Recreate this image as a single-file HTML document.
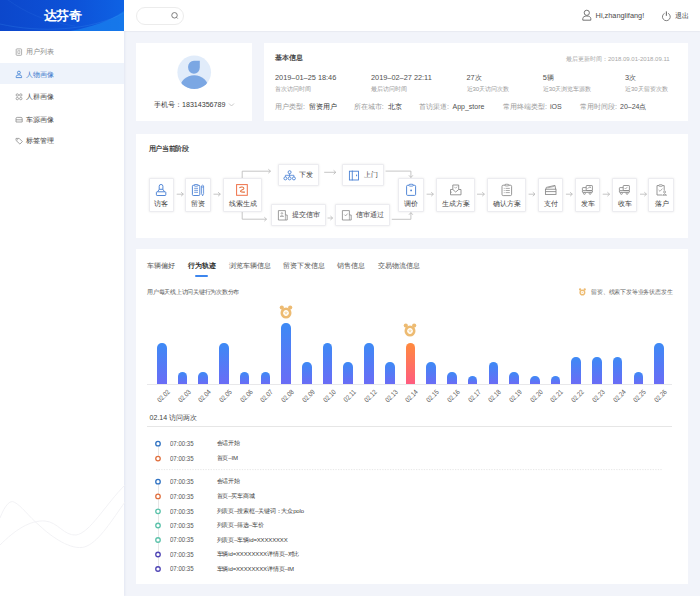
<!DOCTYPE html><html><head><meta charset="utf-8"><style>
html,body{margin:0;padding:0;width:700px;height:596px;overflow:hidden;background:#f2f4fa;font-family:"Liberation Sans",sans-serif;}
.t{position:absolute;white-space:nowrap;line-height:12px;}
.bx{position:absolute;box-sizing:border-box;}
.card{position:absolute;background:#fff;}
svg{position:absolute;overflow:visible;}
</style></head><body>
<div class="card" style="left:0;top:0;width:124px;height:596px;box-shadow:1px 0 2px rgba(200,205,225,.35)"></div>
<svg style="left:0;top:460px" width="124" height="136" viewBox="0 0 124 136">
<path d="M0 58 C5 45 10 40 14 42 C22 46 28 56 40 66 C55 80 75 92 87 86 C100 80 112 60 125 42" fill="none" stroke="#f0f0f4" stroke-width="0.9"/>
<path d="M0 85 C15 70 30 60 45 61 C58 62 64 76 76 75 C90 73 105 45 125 25" fill="none" stroke="#f0f0f4" stroke-width="0.9"/>
</svg>
<div class="bx" style="left:0;top:62.6px;width:124px;height:21.8px;background:#eef3fb"></div>
<div class="t" style="left:26px;top:46.10px;font-size:7px;color:#8a8a8a;font-weight:normal;">用户列表</div>
<div class="t" style="left:26px;top:68.60px;font-size:7px;color:#3a78cc;font-weight:normal;">人物画像</div>
<div class="t" style="left:26px;top:91.10px;font-size:7px;color:#444;font-weight:normal;">人群画像</div>
<div class="t" style="left:26px;top:113.60px;font-size:7px;color:#444;font-weight:normal;">车源画像</div>
<div class="t" style="left:26px;top:135.40px;font-size:7px;color:#444;font-weight:normal;">标签管理</div>
<svg style="left:0;top:0" width="1" height="1"><rect x="16.2" y="48.9" width="5.4" height="6.4" rx="0.7" fill="none" stroke="#9a9a9a" stroke-width="0.8"/><rect x="17.9" y="50.8" width="2" height="2.6" fill="none" stroke="#9a9a9a" stroke-width="0.6"/></svg>
<svg style="left:0;top:0" width="1" height="1"><circle cx="18.9" cy="72.6" r="1.45" fill="none" stroke="#3f7fd3" stroke-width="0.85"/><path d="M16.2 77.6 V76.6 Q16.2 74.8 18.9 74.8 Q21.6 74.8 21.6 76.6 V77.6 Z" fill="none" stroke="#3f7fd3" stroke-width="0.85"/></svg>
<svg style="left:0;top:0" width="1" height="1"><circle cx="17.3" cy="95" r="1.2" fill="none" stroke="#8d8d8d" stroke-width="0.75"/><circle cx="20.8" cy="95" r="1.2" fill="none" stroke="#8d8d8d" stroke-width="0.75"/><circle cx="17.3" cy="98.6" r="1.2" fill="none" stroke="#8d8d8d" stroke-width="0.75"/><circle cx="20.8" cy="98.6" r="1.2" fill="none" stroke="#8d8d8d" stroke-width="0.75"/></svg>
<svg style="left:0;top:0" width="1" height="1"><path d="M16 122 V118.6 Q16 117.4 17.2 117.4 H21 Q22.2 117.4 22.2 118.6 V122 Z M16 119.8 H22.2" fill="none" stroke="#8d8d8d" stroke-width="0.8"/></svg>
<svg style="left:0;top:0" width="1" height="1"><path d="M16 138.4 H19.2 L22.4 141.6 L19.9 144.1 L16 140.4 Z" fill="none" stroke="#8d8d8d" stroke-width="0.8"/><circle cx="17.6" cy="139.8" r="0.5" fill="#8d8d8d"/></svg>
<div class="card" style="left:124px;top:0;width:576px;height:31px;box-shadow:0 0.5px 1.5px rgba(190,192,205,.45)"></div>
<div class="bx" style="left:0;top:0;width:124px;height:31px;background:linear-gradient(90deg,#0c47cb 0%,#0d52d8 60%,#0e62e4 100%);overflow:hidden">
<svg style="left:0;top:0" width="124" height="31" viewBox="0 0 124 31">
<path d="M70 31 C92 27 110 21 124 11 V31 Z" fill="#1a82ee" opacity="0.7"/>
<path d="M0 24 C40 33 90 31 124 13" fill="none" stroke="#3a8ff0" stroke-width="0.5" opacity="0.5"/>
<path d="M8 0 C25 12 45 22 75 26" fill="none" stroke="#3a7fe8" stroke-width="0.5" opacity="0.35"/>
</svg></div>
<div class="t" style="left:43.7px;top:9.60px;font-size:13px;color:#fff;font-weight:bold;letter-spacing:-0.5px">达芬奇</div>
<div class="bx" style="left:136px;top:7.3px;width:48px;height:17.4px;border:1px solid #ececec;border-radius:9px"></div>
<svg style="left:169px;top:10px" width="10" height="10" viewBox="0 0 10 10">
<circle cx="5.5" cy="5.3" r="2.75" fill="none" stroke="#6a6a6a" stroke-width="0.85"/><line x1="7.5" y1="7.3" x2="8.7" y2="8.5" stroke="#6a6a6a" stroke-width="0.85"/></svg>
<svg style="left:581px;top:9px" width="12" height="13" viewBox="0 0 12 13">
<circle cx="5.8" cy="3.8" r="2.6" fill="none" stroke="#666" stroke-width="0.9"/><path d="M1.8 11.2 V9.5 C1.8 8 3.5 7 5.8 7 C8.1 7 9.8 8 9.8 9.5 V11.2 Z" fill="none" stroke="#666" stroke-width="0.9"/></svg>
<div class="t" style="left:595.6px;top:9.80px;font-size:7.35px;color:#4a4a4a;font-weight:normal;">Hi,zhanglifang!</div>
<svg style="left:660px;top:9px" width="13" height="13" viewBox="0 0 13 13">
<path d="M4.6 4.3 A3.9 3.9 0 1 0 8.1 4.3" fill="none" stroke="#6a6a6a" stroke-width="0.85"/><line x1="6.35" y1="2.4" x2="6.35" y2="6.8" stroke="#555" stroke-width="0.95"/></svg>
<div class="t" style="left:675px;top:10.00px;font-size:6.5px;color:#444;font-weight:normal;">退出</div>
<div class="card" style="left:136px;top:43.3px;width:116px;height:77.7px"></div>
<svg style="left:176px;top:54px" width="36" height="36" viewBox="0 0 36 36">
<defs><clipPath id="cc"><circle cx="18.2" cy="18.3" r="16.8"/></clipPath></defs>
<circle cx="18.2" cy="18.3" r="16.8" fill="#e1ecfa"/>
<g clip-path="url(#cc)">
<path d="M23.8 6.7 V13.6 A5.85 6.2 0 0 1 12.1 13.6 V12.55 A5.85 5.85 0 0 1 17.95 6.7 Z" fill="#7ba7e3"/>
<ellipse cx="18.2" cy="34.5" rx="14.2" ry="13.3" fill="#7ba7e3"/>
</g></svg>
<div class="t" style="left:154px;top:99.00px;font-size:7.1px;color:#3a3a3a;font-weight:normal;">手机号：18314356789</div>
<svg style="left:228px;top:102px" width="7" height="6" viewBox="0 0 7 6"><path d="M1 1.5 L3.5 4 L6 1.5" fill="none" stroke="#bbb" stroke-width="0.8"/></svg>
<div class="card" style="left:264px;top:43.3px;width:424px;height:77.7px"></div>
<div class="t" style="left:275px;top:52.20px;font-size:7px;color:#333;font-weight:normal;-webkit-text-stroke:0.2px #333">基本信息</div>
<div class="t" style="left:566px;top:52.70px;font-size:6px;color:#a8a8a8;font-weight:normal;">最后更新时间：2018.09.01-2018.09.11</div>
<div class="t" style="left:275px;top:71.60px;font-size:7.35px;color:#505050;font-weight:normal;">2019–01–25 18:46</div>
<div class="t" style="left:275px;top:82.60px;font-size:6px;color:#999;font-weight:normal;">首次访问时间</div>
<div class="t" style="left:371px;top:71.60px;font-size:7.35px;color:#505050;font-weight:normal;">2019–02–27 22:11</div>
<div class="t" style="left:371px;top:82.60px;font-size:6px;color:#999;font-weight:normal;">最后访问时间</div>
<div class="t" style="left:466.5px;top:71.60px;font-size:7.35px;color:#505050;font-weight:normal;">27次</div>
<div class="t" style="left:466.5px;top:82.60px;font-size:6px;color:#999;font-weight:normal;">近30天访问次数</div>
<div class="t" style="left:542.7px;top:71.60px;font-size:7.35px;color:#505050;font-weight:normal;">5辆</div>
<div class="t" style="left:542.7px;top:82.60px;font-size:6px;color:#999;font-weight:normal;">近30天浏览车源数</div>
<div class="t" style="left:625px;top:71.60px;font-size:7.35px;color:#505050;font-weight:normal;">3次</div>
<div class="t" style="left:625px;top:82.60px;font-size:6px;color:#999;font-weight:normal;">近30天留资次数</div>
<div class="t" style="left:275px;top:101.00px;font-size:7px;color:#999;font-weight:normal;">用户类型:</div>
<div class="t" style="left:309.4px;top:101.00px;font-size:7px;color:#333;font-weight:normal;">留资用户</div>
<div class="t" style="left:353.7px;top:101.00px;font-size:7px;color:#999;font-weight:normal;">所在城市:</div>
<div class="t" style="left:388px;top:101.00px;font-size:7px;color:#333;font-weight:normal;">北京</div>
<div class="t" style="left:419px;top:101.00px;font-size:7px;color:#999;font-weight:normal;">首访渠道:</div>
<div class="t" style="left:452.5px;top:101.00px;font-size:7px;color:#505050;font-weight:normal;">App_store</div>
<div class="t" style="left:503px;top:101.00px;font-size:7px;color:#999;font-weight:normal;">常用终端类型:</div>
<div class="t" style="left:550px;top:101.00px;font-size:7px;color:#505050;font-weight:normal;">iOS</div>
<div class="t" style="left:580px;top:101.00px;font-size:7px;color:#999;font-weight:normal;">常用时间段:</div>
<div class="t" style="left:620px;top:101.00px;font-size:7px;color:#505050;font-weight:normal;">20–24点</div>
<div class="card" style="left:136px;top:133.5px;width:552px;height:104.5px"></div>
<div class="t" style="left:148.5px;top:142.80px;font-size:7px;color:#333;font-weight:normal;-webkit-text-stroke:0.2px #333;letter-spacing:-0.3px">用户当前阶段</div>
<div class="bx" style="left:148.5px;top:178px;width:25.00px;height:34.00px;border:1px solid #ececf0;border-radius:1px;box-shadow:0 0 2.5px rgba(0,0,0,.09);background:#fff"></div>
<div class="t" style="left:154.4px;top:198.00px;font-size:6.6px;color:#444;font-weight:normal;">访客</div>
<div class="bx" style="left:185.2px;top:178px;width:25.50px;height:34.00px;border:1px solid #ececf0;border-radius:1px;box-shadow:0 0 2.5px rgba(0,0,0,.09);background:#fff"></div>
<div class="t" style="left:191.35px;top:198.00px;font-size:6.6px;color:#444;font-weight:normal;">留资</div>
<div class="bx" style="left:222.5px;top:178px;width:39.00px;height:34.00px;border:1px solid #ececf0;border-radius:1px;box-shadow:0 0 2.5px rgba(0,0,0,.09);background:#fff"></div>
<div class="t" style="left:228.8px;top:198.00px;font-size:6.6px;color:#444;font-weight:normal;">线索生成</div>
<div class="bx" style="left:398.4px;top:178px;width:25.20px;height:34.00px;border:1px solid #ececf0;border-radius:1px;box-shadow:0 0 2.5px rgba(0,0,0,.09);background:#fff"></div>
<div class="t" style="left:404.4px;top:198.00px;font-size:6.6px;color:#444;font-weight:normal;">调价</div>
<div class="bx" style="left:436px;top:178px;width:38.50px;height:34.00px;border:1px solid #ececf0;border-radius:1px;box-shadow:0 0 2.5px rgba(0,0,0,.09);background:#fff"></div>
<div class="t" style="left:442.05px;top:198.00px;font-size:6.6px;color:#444;font-weight:normal;">生成方案</div>
<div class="bx" style="left:486.8px;top:178px;width:38.80px;height:34.00px;border:1px solid #ececf0;border-radius:1px;box-shadow:0 0 2.5px rgba(0,0,0,.09);background:#fff"></div>
<div class="t" style="left:493.00000000000006px;top:198.00px;font-size:6.6px;color:#444;font-weight:normal;">确认方案</div>
<div class="bx" style="left:537.5px;top:178px;width:25.40px;height:34.00px;border:1px solid #ececf0;border-radius:1px;box-shadow:0 0 2.5px rgba(0,0,0,.09);background:#fff"></div>
<div class="t" style="left:543.6px;top:198.00px;font-size:6.6px;color:#444;font-weight:normal;">支付</div>
<div class="bx" style="left:574.7px;top:178px;width:25.20px;height:34.00px;border:1px solid #ececf0;border-radius:1px;box-shadow:0 0 2.5px rgba(0,0,0,.09);background:#fff"></div>
<div class="t" style="left:580.6999999999999px;top:198.00px;font-size:6.6px;color:#444;font-weight:normal;">发车</div>
<div class="bx" style="left:611.7px;top:178px;width:25.10px;height:34.00px;border:1px solid #ececf0;border-radius:1px;box-shadow:0 0 2.5px rgba(0,0,0,.09);background:#fff"></div>
<div class="t" style="left:617.65px;top:198.00px;font-size:6.6px;color:#444;font-weight:normal;">收车</div>
<div class="bx" style="left:648.4px;top:178px;width:25.40px;height:34.00px;border:1px solid #ececf0;border-radius:1px;box-shadow:0 0 2.5px rgba(0,0,0,.09);background:#fff"></div>
<div class="t" style="left:654.4999999999999px;top:198.00px;font-size:6.6px;color:#444;font-weight:normal;">落户</div>
<div class="bx" style="left:277.5px;top:163.5px;width:41.50px;height:22.50px;border:1px solid #ececf0;border-radius:1px;box-shadow:0 0 2.5px rgba(0,0,0,.09);background:#fff"></div>
<div class="t" style="left:299.3px;top:169.35px;font-size:6.6px;color:#444;font-weight:normal;">下发</div>
<div class="bx" style="left:341.5px;top:163.5px;width:42.00px;height:22.50px;border:1px solid #ececf0;border-radius:1px;box-shadow:0 0 2.5px rgba(0,0,0,.09);background:#fff"></div>
<div class="t" style="left:363.7px;top:169.35px;font-size:6.6px;color:#444;font-weight:normal;">上门</div>
<div class="bx" style="left:270.7px;top:203.5px;width:54.90px;height:22.50px;border:1px solid #ececf0;border-radius:1px;box-shadow:0 0 2.5px rgba(0,0,0,.09);background:#fff"></div>
<div class="t" style="left:292.4px;top:209.35px;font-size:6.6px;color:#444;font-weight:normal;">提交信审</div>
<div class="bx" style="left:334.7px;top:203.5px;width:55.30px;height:22.50px;border:1px solid #ececf0;border-radius:1px;box-shadow:0 0 2.5px rgba(0,0,0,.09);background:#fff"></div>
<div class="t" style="left:356.4px;top:209.35px;font-size:6.6px;color:#444;font-weight:normal;">信审通过</div>
<svg style="left:0;top:0" width="1" height="1"><path d="M176.7 194.2 H183.3 M181.10000000000002 192.2 L183.3 194.2 L181.10000000000002 196.2" fill="none" stroke="#b8b8b8" stroke-width="0.8"/></svg>
<svg style="left:0;top:0" width="1" height="1"><path d="M213.5 194.2 H220.3 M218.10000000000002 192.2 L220.3 194.2 L218.10000000000002 196.2" fill="none" stroke="#b8b8b8" stroke-width="0.8"/></svg>
<svg style="left:0;top:0" width="1" height="1"><path d="M426.6 194.2 H433.4 M431.2 192.2 L433.4 194.2 L431.2 196.2" fill="none" stroke="#b8b8b8" stroke-width="0.8"/></svg>
<svg style="left:0;top:0" width="1" height="1"><path d="M477 194.2 H484.4 M482.2 192.2 L484.4 194.2 L482.2 196.2" fill="none" stroke="#b8b8b8" stroke-width="0.8"/></svg>
<svg style="left:0;top:0" width="1" height="1"><path d="M528.6 194.2 H535 M532.8 192.2 L535 194.2 L532.8 196.2" fill="none" stroke="#b8b8b8" stroke-width="0.8"/></svg>
<svg style="left:0;top:0" width="1" height="1"><path d="M565.9 194.2 H572.3 M570.0999999999999 192.2 L572.3 194.2 L570.0999999999999 196.2" fill="none" stroke="#b8b8b8" stroke-width="0.8"/></svg>
<svg style="left:0;top:0" width="1" height="1"><path d="M602.7 194.2 H609.6 M607.4 192.2 L609.6 194.2 L607.4 196.2" fill="none" stroke="#b8b8b8" stroke-width="0.8"/></svg>
<svg style="left:0;top:0" width="1" height="1"><path d="M640 194.2 H646.5 M644.3 192.2 L646.5 194.2 L644.3 196.2" fill="none" stroke="#b8b8b8" stroke-width="0.8"/></svg>
<svg style="left:0;top:0" width="1" height="1"><path d="M324.2 172.3 H335.8 M333.6 170.3 L335.8 172.3 L333.6 174.3" fill="none" stroke="#b8b8b8" stroke-width="0.8"/></svg>
<svg style="left:0;top:0" width="1" height="1"><path d="M327.6 218 H332.6 M330.40000000000003 216 L332.6 218 L330.40000000000003 220" fill="none" stroke="#b8b8b8" stroke-width="0.8"/></svg>
<svg style="left:0;top:0" width="1" height="1">
<path d="M242.2 178 V171.2 H270.5" fill="none" stroke="#b8b8b8" stroke-width="0.8"/>
<path d="M268.3 169.2 L270.5 171.2 L268.3 173.2" fill="none" stroke="#b8b8b8" stroke-width="0.8"/>
<path d="M242.2 212 V219.2 H266.5" fill="none" stroke="#b8b8b8" stroke-width="0.8"/>
<path d="M264.3 217.2 L266.5 219.2 L264.3 221.2" fill="none" stroke="#b8b8b8" stroke-width="0.8"/>
<path d="M385.6 171.1 H410.9 V177.5" fill="none" stroke="#b8b8b8" stroke-width="0.8"/>
<path d="M408.9 175.3 L410.9 177.5 L412.9 175.3" fill="none" stroke="#b8b8b8" stroke-width="0.8"/>
<path d="M391.8 219.3 H410.9 V212.6" fill="none" stroke="#b8b8b8" stroke-width="0.8"/>
<path d="M408.9 214.8 L410.9 212.6 L412.9 214.8" fill="none" stroke="#b8b8b8" stroke-width="0.8"/>
</svg>
<svg style="left:154px;top:182px" width="14" height="16" viewBox="154 182 14 16"><path d="M159.2 189.3 V186.3 A1.85 1.85 0 0 1 162.9 186.3 V189.3 Z" fill="none" stroke="#4b82d4" stroke-width="0.95"/><path d="M159.2 189.3 L157.6 191.8 M162.9 189.3 L164.5 191.8" fill="none" stroke="#4b82d4" stroke-width="0.95"/><rect x="156.4" y="191.8" width="9.4" height="3.7" rx="0.7" fill="none" stroke="#4b82d4" stroke-width="0.95"/></svg>
<svg style="left:190px;top:182px" width="16" height="16" viewBox="190 182 16 16"><rect x="192.4" y="185.3" width="7.4" height="10.2" rx="0.9" fill="none" stroke="#4b82d4" stroke-width="0.95"/><rect x="194.3" y="184.5" width="3.6" height="1.7" rx="0.5" fill="#fff" stroke="#4b82d4" stroke-width="0.8"/><path d="M194.2 188.3 H198 M194.2 190.3 H198 M194.2 192.3 H198" stroke="#4b82d4" stroke-width="0.8"/><path d="M201.6 185.8 Q202.6 184.6 203.6 185.8 V193.6 L202.6 195.8 L201.6 193.6 Z M201.6 187 H203.6" fill="none" stroke="#4b82d4" stroke-width="0.8"/></svg>
<svg style="left:234px;top:182px" width="16" height="16" viewBox="234 182 16 16"><rect x="236.6" y="184.6" width="10.7" height="10.7" fill="none" stroke="#ef7148" stroke-width="1"/><path d="M239.4 187.7 C241 186.6 244 186.7 243.9 188.5 C243.7 189.9 240.6 189.7 240.5 191.3 C240.5 192.3 243 192.1 244.9 192.1" fill="none" stroke="#e2703c" stroke-width="1.05"/></svg>
<svg style="left:282px;top:167px" width="16" height="16" viewBox="282 167 16 16"><circle cx="289.6" cy="172.2" r="1.5" fill="none" stroke="#4b82d4" stroke-width="0.9"/><circle cx="285.4" cy="178.4" r="1.5" fill="none" stroke="#4b82d4" stroke-width="0.9"/><circle cx="289.6" cy="178.4" r="1.5" fill="none" stroke="#4b82d4" stroke-width="0.9"/><circle cx="293.9" cy="178.4" r="1.5" fill="none" stroke="#4b82d4" stroke-width="0.9"/><path d="M289.6 173.7 V176.9 M285.4 176.9 V175.3 H293.9 V176.9" fill="none" stroke="#4b82d4" stroke-width="0.8"/></svg>
<svg style="left:346px;top:167px" width="16" height="16" viewBox="346 167 16 16"><rect x="349.4" y="171.2" width="9.1" height="8.8" fill="none" stroke="#4b82d4" stroke-width="0.9"/><path d="M352.3 170.6 V180.4" stroke="#4b82d4" stroke-width="0.9"/><path d="M356.6 174.6 V176.2" stroke="#4b82d4" stroke-width="1"/></svg>
<svg style="left:404px;top:182px" width="14" height="16" viewBox="404 182 14 16"><rect x="406.6" y="185.3" width="9" height="10.1" rx="1" fill="none" stroke="#4b82d4" stroke-width="0.95"/><ellipse cx="411.1" cy="185.2" rx="2.6" ry="1" fill="#fff" stroke="#4b82d4" stroke-width="0.85"/><circle cx="411.1" cy="190.4" r="0.9" fill="#4b82d4"/></svg>
<svg style="left:276px;top:208px" width="14" height="14" viewBox="276 208 14 14"><path d="M278.4 210.6 H285.4 V215 H287.2 V220 H278.4 Z" fill="none" stroke="#858585" stroke-width="0.8"/><path d="M285.4 215 V220" stroke="#858585" stroke-width="0.6"/><circle cx="281.9" cy="213.4" r="0.8" fill="none" stroke="#858585" stroke-width="0.6"/><path d="M280.2 216.4 Q281.9 214.6 283.6 216.4 Z" fill="none" stroke="#858585" stroke-width="0.6"/></svg>
<svg style="left:340px;top:208px" width="14" height="14" viewBox="340 208 14 14"><path d="M342.4 210.6 H349.4 V215 H351.2 V220 H342.4 Z" fill="none" stroke="#858585" stroke-width="0.8"/><path d="M349.4 215 V220" stroke="#858585" stroke-width="0.6"/><path d="M344.3 214.6 L345.6 215.9 L347.6 213.6" fill="none" stroke="#858585" stroke-width="0.7"/></svg>
<svg style="left:448px;top:182px" width="16" height="16" viewBox="448 182 16 16"><path d="M452.8 189.5 V185 H458.7 V189.5" fill="none" stroke="#858585" stroke-width="0.85"/><path d="M454.3 186.8 L455.7 188.2 L457.3 186.6" fill="none" stroke="#858585" stroke-width="0.6"/><path d="M450.5 189.5 H452.8 L455.7 192 L458.7 189.5 H461 V194.8 H450.5 Z" fill="none" stroke="#858585" stroke-width="0.85"/><path d="M450.5 192.2 H452" stroke="#858585" stroke-width="0.6"/></svg>
<svg style="left:499px;top:182px" width="16" height="16" viewBox="499 182 16 16"><rect x="502" y="185.2" width="9.6" height="10.4" rx="1.2" fill="none" stroke="#858585" stroke-width="0.85"/><ellipse cx="506.8" cy="185.1" rx="2.4" ry="0.9" fill="#fff" stroke="#858585" stroke-width="0.75"/><path d="M503.8 188.4 H504.6 M505.6 188.4 H509.8 M503.8 190.5 H504.6 M505.6 190.5 H509.8 M503.8 192.6 H504.6 M505.6 192.6 H509.8" stroke="#858585" stroke-width="0.7"/></svg>
<svg style="left:543px;top:182px" width="16" height="16" viewBox="543 182 16 16"><path d="M546 189.2 L546.3 187.4 L555 185.4 L555.6 189.2" fill="none" stroke="#858585" stroke-width="0.85"/><path d="M547.5 187.9 L554.5 186.4" stroke="#858585" stroke-width="0.6"/><rect x="545.4" y="189.2" width="10.6" height="5.2" fill="none" stroke="#858585" stroke-width="0.85"/><path d="M545.4 191.6 H556" stroke="#858585" stroke-width="0.85"/></svg>
<svg style="left:579px;top:182px" width="16" height="16" viewBox="579 182 16 16"><rect x="586.2" y="185.5" width="6.2" height="5.1" rx="0.6" fill="none" stroke="#858585" stroke-width="0.85"/><path d="M586.2 187.6 H582.9 Q582.4 187.6 582.4 188.2 V190.6" fill="none" stroke="#858585" stroke-width="0.85"/><rect x="582.4" y="190.6" width="10" height="1.8" rx="0.4" fill="none" stroke="#858585" stroke-width="0.85"/><circle cx="584.4" cy="193.4" r="0.95" fill="#fff" stroke="#858585" stroke-width="0.8"/><circle cx="590.1" cy="193.4" r="0.95" fill="#fff" stroke="#858585" stroke-width="0.8"/><path d="M587.5 189 Q588.5 186.6 590.6 187.2 M589.6 186.6 L590.6 187.2 L590 188.1" fill="none" stroke="#858585" stroke-width="0.6"/></svg>
<svg style="left:616px;top:182px" width="16" height="16" viewBox="616 182 16 16"><rect x="623.2" y="185.5" width="6.2" height="5.1" rx="0.6" fill="none" stroke="#858585" stroke-width="0.85"/><path d="M623.2 187.6 H619.9 Q619.4 187.6 619.4 188.2 V190.6" fill="none" stroke="#858585" stroke-width="0.85"/><rect x="619.4" y="190.6" width="10" height="1.8" rx="0.4" fill="none" stroke="#858585" stroke-width="0.85"/><circle cx="621.4" cy="193.4" r="0.95" fill="#fff" stroke="#858585" stroke-width="0.8"/><circle cx="627.1" cy="193.4" r="0.95" fill="#fff" stroke="#858585" stroke-width="0.8"/><path d="M624.6 188 L625.6 189 L627.4 186.9" fill="none" stroke="#858585" stroke-width="0.6"/></svg>
<svg style="left:654px;top:182px" width="16" height="16" viewBox="654 182 16 16"><path d="M664.2 190.4 V185.6 H657 V195 H662" fill="none" stroke="#858585" stroke-width="0.85"/><rect x="659" y="184.7" width="3.3" height="1.6" rx="0.5" fill="#fff" stroke="#858585" stroke-width="0.7"/><path d="M658.6 190 L660 191.3 L662.4 188.6" fill="none" stroke="#858585" stroke-width="0.65"/><circle cx="664.6" cy="192" r="1" fill="none" stroke="#858585" stroke-width="0.7"/><path d="M662.6 195.2 Q664.6 192.8 666.6 195.2 Z" fill="none" stroke="#858585" stroke-width="0.7"/></svg>
<div class="card" style="left:136px;top:249.2px;width:552px;height:334.6px"></div>
<div class="t" style="left:147px;top:259.80px;font-size:6.8px;color:#555;font-weight:normal;">车辆偏好</div>
<div class="t" style="left:188px;top:259.80px;font-size:6.8px;color:#2a2a2a;font-weight:bold;">行为轨迹</div>
<div class="t" style="left:228.6px;top:259.80px;font-size:6.8px;color:#555;font-weight:normal;">浏览车辆信息</div>
<div class="t" style="left:282.9px;top:259.80px;font-size:6.8px;color:#555;font-weight:normal;">留资下发信息</div>
<div class="t" style="left:337px;top:259.80px;font-size:6.8px;color:#555;font-weight:normal;">销售信息</div>
<div class="t" style="left:377.7px;top:259.80px;font-size:6.8px;color:#555;font-weight:normal;">交易物流信息</div>
<div class="bx" style="left:195px;top:275px;width:13px;height:1.8px;background:#3d86ee;border-radius:1px"></div>
<div class="t" style="left:147px;top:286.00px;font-size:6px;color:#555;font-weight:normal;letter-spacing:-0.25px">用户每天线上访问关键行为次数分布</div>
<svg style="left:577.60px;top:287.10px" width="8.80" height="8.80" viewBox="-8 -10 16 16">
<circle cx="-4.2" cy="-5.4" r="2.1" fill="#edbb72"/><circle cx="4.2" cy="-5.4" r="2.1" fill="#edbb72"/>
<circle cx="0" cy="-6.6" r="1.3" fill="#fff"/>
<circle cx="0" cy="0" r="4.2" fill="#fff" stroke="#edbb72" stroke-width="2.6"/>
<path d="M0 -2.2 L0.65 -0.8 L2.1 -0.7 L1 0.3 L1.35 1.8 L0 1 L-1.35 1.8 L-1 0.3 L-2.1 -0.7 L-0.65 -0.8 Z" fill="#f6dcae"/>
</svg>
<div class="t" style="left:591.3px;top:285.80px;font-size:6px;color:#666;font-weight:normal;letter-spacing:-0.2px">留资、线索下发等业务状态发生</div>
<div class="bx" style="left:147px;top:384px;width:525px;height:0.8px;background:#e8e8ea"></div>
<div class="bx" style="left:157.00px;top:342.7px;width:9.6px;height:41.40px;background:linear-gradient(180deg,#3d8af5,#6a6cf6);border-radius:4.8px 4.8px 0 0"></div>
<div class="t" style="left:138.80px;top:384.6px;width:30px;text-align:right;font-size:7px;color:#5a5a5a;transform-origin:100% 50%;transform:rotate(-45deg) scaleX(0.84);line-height:12px">02.02</div>
<div class="bx" style="left:177.72px;top:371.7px;width:9.6px;height:12.40px;background:linear-gradient(180deg,#3d8af5,#6a6cf6);border-radius:4.8px 4.8px 0 0"></div>
<div class="t" style="left:159.52px;top:384.6px;width:30px;text-align:right;font-size:7px;color:#5a5a5a;transform-origin:100% 50%;transform:rotate(-45deg) scaleX(0.84);line-height:12px">02.03</div>
<div class="bx" style="left:198.44px;top:371.7px;width:9.6px;height:12.40px;background:linear-gradient(180deg,#3d8af5,#6a6cf6);border-radius:4.8px 4.8px 0 0"></div>
<div class="t" style="left:180.24px;top:384.6px;width:30px;text-align:right;font-size:7px;color:#5a5a5a;transform-origin:100% 50%;transform:rotate(-45deg) scaleX(0.84);line-height:12px">02.04</div>
<div class="bx" style="left:219.16px;top:342.7px;width:9.6px;height:41.40px;background:linear-gradient(180deg,#3d8af5,#6a6cf6);border-radius:4.8px 4.8px 0 0"></div>
<div class="t" style="left:200.96px;top:384.6px;width:30px;text-align:right;font-size:7px;color:#5a5a5a;transform-origin:100% 50%;transform:rotate(-45deg) scaleX(0.84);line-height:12px">02.05</div>
<div class="bx" style="left:239.88px;top:371.7px;width:9.6px;height:12.40px;background:linear-gradient(180deg,#3d8af5,#6a6cf6);border-radius:4.8px 4.8px 0 0"></div>
<div class="t" style="left:221.68px;top:384.6px;width:30px;text-align:right;font-size:7px;color:#5a5a5a;transform-origin:100% 50%;transform:rotate(-45deg) scaleX(0.84);line-height:12px">02.06</div>
<div class="bx" style="left:260.60px;top:371.7px;width:9.6px;height:12.40px;background:linear-gradient(180deg,#3d8af5,#6a6cf6);border-radius:4.8px 4.8px 0 0"></div>
<div class="t" style="left:242.40px;top:384.6px;width:30px;text-align:right;font-size:7px;color:#5a5a5a;transform-origin:100% 50%;transform:rotate(-45deg) scaleX(0.84);line-height:12px">02.07</div>
<div class="bx" style="left:281.32px;top:322.9px;width:9.6px;height:61.20px;background:linear-gradient(180deg,#3d8af5,#6a6cf6);border-radius:4.8px 4.8px 0 0"></div>
<div class="t" style="left:263.12px;top:384.6px;width:30px;text-align:right;font-size:7px;color:#5a5a5a;transform-origin:100% 50%;transform:rotate(-45deg) scaleX(0.84);line-height:12px">02.08</div>
<div class="bx" style="left:302.04px;top:362.2px;width:9.6px;height:21.90px;background:linear-gradient(180deg,#3d8af5,#6a6cf6);border-radius:4.8px 4.8px 0 0"></div>
<div class="t" style="left:283.84px;top:384.6px;width:30px;text-align:right;font-size:7px;color:#5a5a5a;transform-origin:100% 50%;transform:rotate(-45deg) scaleX(0.84);line-height:12px">02.09</div>
<div class="bx" style="left:322.76px;top:342.7px;width:9.6px;height:41.40px;background:linear-gradient(180deg,#3d8af5,#6a6cf6);border-radius:4.8px 4.8px 0 0"></div>
<div class="t" style="left:304.56px;top:384.6px;width:30px;text-align:right;font-size:7px;color:#5a5a5a;transform-origin:100% 50%;transform:rotate(-45deg) scaleX(0.84);line-height:12px">02.10</div>
<div class="bx" style="left:343.48px;top:362.2px;width:9.6px;height:21.90px;background:linear-gradient(180deg,#3d8af5,#6a6cf6);border-radius:4.8px 4.8px 0 0"></div>
<div class="t" style="left:325.28px;top:384.6px;width:30px;text-align:right;font-size:7px;color:#5a5a5a;transform-origin:100% 50%;transform:rotate(-45deg) scaleX(0.84);line-height:12px">02.11</div>
<div class="bx" style="left:364.20px;top:342.7px;width:9.6px;height:41.40px;background:linear-gradient(180deg,#3d8af5,#6a6cf6);border-radius:4.8px 4.8px 0 0"></div>
<div class="t" style="left:346.00px;top:384.6px;width:30px;text-align:right;font-size:7px;color:#5a5a5a;transform-origin:100% 50%;transform:rotate(-45deg) scaleX(0.84);line-height:12px">02.12</div>
<div class="bx" style="left:384.92px;top:362.2px;width:9.6px;height:21.90px;background:linear-gradient(180deg,#3d8af5,#6a6cf6);border-radius:4.8px 4.8px 0 0"></div>
<div class="t" style="left:366.72px;top:384.6px;width:30px;text-align:right;font-size:7px;color:#5a5a5a;transform-origin:100% 50%;transform:rotate(-45deg) scaleX(0.84);line-height:12px">02.13</div>
<div class="bx" style="left:405.64px;top:342.6px;width:9.6px;height:41.50px;background:linear-gradient(180deg,#ff8a3d,#ff5c80);border-radius:4.8px 4.8px 0 0"></div>
<div class="t" style="left:387.44px;top:384.6px;width:30px;text-align:right;font-size:7px;color:#5a5a5a;transform-origin:100% 50%;transform:rotate(-45deg) scaleX(0.84);line-height:12px">02.14</div>
<div class="bx" style="left:426.36px;top:362.2px;width:9.6px;height:21.90px;background:linear-gradient(180deg,#3d8af5,#6a6cf6);border-radius:4.8px 4.8px 0 0"></div>
<div class="t" style="left:408.16px;top:384.6px;width:30px;text-align:right;font-size:7px;color:#5a5a5a;transform-origin:100% 50%;transform:rotate(-45deg) scaleX(0.84);line-height:12px">02.15</div>
<div class="bx" style="left:447.08px;top:372px;width:9.6px;height:12.10px;background:linear-gradient(180deg,#3d8af5,#6a6cf6);border-radius:4.8px 4.8px 0 0"></div>
<div class="t" style="left:428.88px;top:384.6px;width:30px;text-align:right;font-size:7px;color:#5a5a5a;transform-origin:100% 50%;transform:rotate(-45deg) scaleX(0.84);line-height:12px">02.16</div>
<div class="bx" style="left:467.80px;top:376.3px;width:9.6px;height:7.80px;background:linear-gradient(180deg,#3d8af5,#6a6cf6);border-radius:4.8px 4.8px 0 0"></div>
<div class="t" style="left:449.60px;top:384.6px;width:30px;text-align:right;font-size:7px;color:#5a5a5a;transform-origin:100% 50%;transform:rotate(-45deg) scaleX(0.84);line-height:12px">02.17</div>
<div class="bx" style="left:488.52px;top:362.2px;width:9.6px;height:21.90px;background:linear-gradient(180deg,#3d8af5,#6a6cf6);border-radius:4.8px 4.8px 0 0"></div>
<div class="t" style="left:470.32px;top:384.6px;width:30px;text-align:right;font-size:7px;color:#5a5a5a;transform-origin:100% 50%;transform:rotate(-45deg) scaleX(0.84);line-height:12px">02.18</div>
<div class="bx" style="left:509.24px;top:372px;width:9.6px;height:12.10px;background:linear-gradient(180deg,#3d8af5,#6a6cf6);border-radius:4.8px 4.8px 0 0"></div>
<div class="t" style="left:491.04px;top:384.6px;width:30px;text-align:right;font-size:7px;color:#5a5a5a;transform-origin:100% 50%;transform:rotate(-45deg) scaleX(0.84);line-height:12px">02.19</div>
<div class="bx" style="left:529.96px;top:376.3px;width:9.6px;height:7.80px;background:linear-gradient(180deg,#3d8af5,#6a6cf6);border-radius:4.8px 4.8px 0 0"></div>
<div class="t" style="left:511.76px;top:384.6px;width:30px;text-align:right;font-size:7px;color:#5a5a5a;transform-origin:100% 50%;transform:rotate(-45deg) scaleX(0.84);line-height:12px">02.20</div>
<div class="bx" style="left:550.68px;top:376.3px;width:9.6px;height:7.80px;background:linear-gradient(180deg,#3d8af5,#6a6cf6);border-radius:4.8px 4.8px 0 0"></div>
<div class="t" style="left:532.48px;top:384.6px;width:30px;text-align:right;font-size:7px;color:#5a5a5a;transform-origin:100% 50%;transform:rotate(-45deg) scaleX(0.84);line-height:12px">02.21</div>
<div class="bx" style="left:571.40px;top:357px;width:9.6px;height:27.10px;background:linear-gradient(180deg,#3d8af5,#6a6cf6);border-radius:4.8px 4.8px 0 0"></div>
<div class="t" style="left:553.20px;top:384.6px;width:30px;text-align:right;font-size:7px;color:#5a5a5a;transform-origin:100% 50%;transform:rotate(-45deg) scaleX(0.84);line-height:12px">02.22</div>
<div class="bx" style="left:592.12px;top:357px;width:9.6px;height:27.10px;background:linear-gradient(180deg,#3d8af5,#6a6cf6);border-radius:4.8px 4.8px 0 0"></div>
<div class="t" style="left:573.92px;top:384.6px;width:30px;text-align:right;font-size:7px;color:#5a5a5a;transform-origin:100% 50%;transform:rotate(-45deg) scaleX(0.84);line-height:12px">02.23</div>
<div class="bx" style="left:612.84px;top:357px;width:9.6px;height:27.10px;background:linear-gradient(180deg,#3d8af5,#6a6cf6);border-radius:4.8px 4.8px 0 0"></div>
<div class="t" style="left:594.64px;top:384.6px;width:30px;text-align:right;font-size:7px;color:#5a5a5a;transform-origin:100% 50%;transform:rotate(-45deg) scaleX(0.84);line-height:12px">02.24</div>
<div class="bx" style="left:633.56px;top:372px;width:9.6px;height:12.10px;background:linear-gradient(180deg,#3d8af5,#6a6cf6);border-radius:4.8px 4.8px 0 0"></div>
<div class="t" style="left:615.36px;top:384.6px;width:30px;text-align:right;font-size:7px;color:#5a5a5a;transform-origin:100% 50%;transform:rotate(-45deg) scaleX(0.84);line-height:12px">02.25</div>
<div class="bx" style="left:654.28px;top:342.9px;width:9.6px;height:41.20px;background:linear-gradient(180deg,#3d8af5,#6a6cf6);border-radius:4.8px 4.8px 0 0"></div>
<div class="t" style="left:636.08px;top:384.6px;width:30px;text-align:right;font-size:7px;color:#5a5a5a;transform-origin:100% 50%;transform:rotate(-45deg) scaleX(0.84);line-height:12px">02.26</div>
<svg style="left:277.70px;top:303.30px" width="16.00" height="16.00" viewBox="-8 -10 16 16">
<circle cx="-4.2" cy="-5.4" r="2.1" fill="#edbb72"/><circle cx="4.2" cy="-5.4" r="2.1" fill="#edbb72"/>
<circle cx="0" cy="-6.6" r="1.3" fill="#fff"/>
<circle cx="0" cy="0" r="4.2" fill="#fff" stroke="#edbb72" stroke-width="2.6"/>
<path d="M0 -2.2 L0.65 -0.8 L2.1 -0.7 L1 0.3 L1.35 1.8 L0 1 L-1.35 1.8 L-1 0.3 L-2.1 -0.7 L-0.65 -0.8 Z" fill="#f6dcae"/>
</svg>
<svg style="left:402.10px;top:320.90px" width="16.00" height="16.00" viewBox="-8 -10 16 16">
<circle cx="-4.2" cy="-5.4" r="2.1" fill="#edbb72"/><circle cx="4.2" cy="-5.4" r="2.1" fill="#edbb72"/>
<circle cx="0" cy="-6.6" r="1.3" fill="#fff"/>
<circle cx="0" cy="0" r="4.2" fill="#fff" stroke="#edbb72" stroke-width="2.6"/>
<path d="M0 -2.2 L0.65 -0.8 L2.1 -0.7 L1 0.3 L1.35 1.8 L0 1 L-1.35 1.8 L-1 0.3 L-2.1 -0.7 L-0.65 -0.8 Z" fill="#f6dcae"/>
</svg>
<div class="t" style="left:149.6px;top:412.40px;font-size:7px;color:#444;font-weight:normal;">02.14 访问两次</div>
<div class="bx" style="left:147px;top:426.3px;width:525px;height:0.8px;background:#e6e6e6"></div>
<div class="bx" style="left:157.6px;top:443.7px;width:0.7px;height:14.9px;background:#e6e6e6"></div>
<div class="bx" style="left:157.6px;top:481.7px;width:0.7px;height:87.3px;background:#e6e6e6"></div>
<svg style="left:0;top:0" width="1" height="1"><path d="M156 469.6 H662" stroke="#dcdcdc" stroke-width="0.7" stroke-dasharray="1.3 1.3"/></svg>
<svg style="left:0;top:0" width="1" height="1"><circle cx="158" cy="443.7" r="2.25" fill="#fff" stroke="#2f72c2" stroke-width="1.3"/></svg>
<div class="t" style="left:169.6px;top:438.10px;font-size:6.9px;color:#555;font-weight:normal;transform:scaleX(0.88);transform-origin:0 50%">07:00:35</div>
<div class="t" style="left:216.6px;top:437.40px;font-size:6px;color:#3c3c3c;font-weight:normal;letter-spacing:-0.15px">会话开始</div>
<svg style="left:0;top:0" width="1" height="1"><circle cx="158" cy="458.6" r="2.25" fill="#fff" stroke="#e0703f" stroke-width="1.3"/></svg>
<div class="t" style="left:169.6px;top:453.00px;font-size:6.9px;color:#555;font-weight:normal;transform:scaleX(0.88);transform-origin:0 50%">07:00:35</div>
<div class="t" style="left:216.6px;top:452.30px;font-size:6px;color:#3c3c3c;font-weight:normal;letter-spacing:-0.15px">首页–IM</div>
<svg style="left:0;top:0" width="1" height="1"><circle cx="158" cy="481.7" r="2.25" fill="#fff" stroke="#2f72c2" stroke-width="1.3"/></svg>
<div class="t" style="left:169.6px;top:476.10px;font-size:6.9px;color:#555;font-weight:normal;transform:scaleX(0.88);transform-origin:0 50%">07:00:35</div>
<div class="t" style="left:216.6px;top:475.40px;font-size:6px;color:#3c3c3c;font-weight:normal;letter-spacing:-0.15px">会话开始</div>
<svg style="left:0;top:0" width="1" height="1"><circle cx="158" cy="496.4" r="2.25" fill="#fff" stroke="#e0703f" stroke-width="1.3"/></svg>
<div class="t" style="left:169.6px;top:490.80px;font-size:6.9px;color:#555;font-weight:normal;transform:scaleX(0.88);transform-origin:0 50%">07:00:35</div>
<div class="t" style="left:216.6px;top:490.10px;font-size:6px;color:#3c3c3c;font-weight:normal;letter-spacing:-0.15px">首页–买车商城</div>
<svg style="left:0;top:0" width="1" height="1"><circle cx="158" cy="511.3" r="2.25" fill="#fff" stroke="#5cc2aa" stroke-width="1.3"/></svg>
<div class="t" style="left:169.6px;top:505.70px;font-size:6.9px;color:#555;font-weight:normal;transform:scaleX(0.88);transform-origin:0 50%">07:00:35</div>
<div class="t" style="left:216.6px;top:505.00px;font-size:6px;color:#3c3c3c;font-weight:normal;letter-spacing:-0.15px">列表页–搜索框–关键词：大众polo</div>
<svg style="left:0;top:0" width="1" height="1"><circle cx="158" cy="525.5" r="2.25" fill="#fff" stroke="#5cc2aa" stroke-width="1.3"/></svg>
<div class="t" style="left:169.6px;top:519.90px;font-size:6.9px;color:#555;font-weight:normal;transform:scaleX(0.88);transform-origin:0 50%">07:00:35</div>
<div class="t" style="left:216.6px;top:519.20px;font-size:6px;color:#3c3c3c;font-weight:normal;letter-spacing:-0.15px">列表页–筛选–车价</div>
<svg style="left:0;top:0" width="1" height="1"><circle cx="158" cy="540" r="2.25" fill="#fff" stroke="#5cc2aa" stroke-width="1.3"/></svg>
<div class="t" style="left:169.6px;top:534.40px;font-size:6.9px;color:#555;font-weight:normal;transform:scaleX(0.88);transform-origin:0 50%">07:00:35</div>
<div class="t" style="left:216.6px;top:533.70px;font-size:6px;color:#3c3c3c;font-weight:normal;letter-spacing:-0.15px">列表页–车辆id=XXXXXXXX</div>
<svg style="left:0;top:0" width="1" height="1"><circle cx="158" cy="554.5" r="2.25" fill="#fff" stroke="#4f45b5" stroke-width="1.3"/></svg>
<div class="t" style="left:169.6px;top:548.90px;font-size:6.9px;color:#555;font-weight:normal;transform:scaleX(0.88);transform-origin:0 50%">07:00:35</div>
<div class="t" style="left:216.6px;top:548.20px;font-size:6px;color:#3c3c3c;font-weight:normal;letter-spacing:-0.15px">车辆id=XXXXXXXX详情页–对比</div>
<svg style="left:0;top:0" width="1" height="1"><circle cx="158" cy="569" r="2.25" fill="#fff" stroke="#4f45b5" stroke-width="1.3"/></svg>
<div class="t" style="left:169.6px;top:563.40px;font-size:6.9px;color:#555;font-weight:normal;transform:scaleX(0.88);transform-origin:0 50%">07:00:35</div>
<div class="t" style="left:216.6px;top:562.70px;font-size:6px;color:#3c3c3c;font-weight:normal;letter-spacing:-0.15px">车辆id=XXXXXXXX详情页–IM</div>
</body></html>
